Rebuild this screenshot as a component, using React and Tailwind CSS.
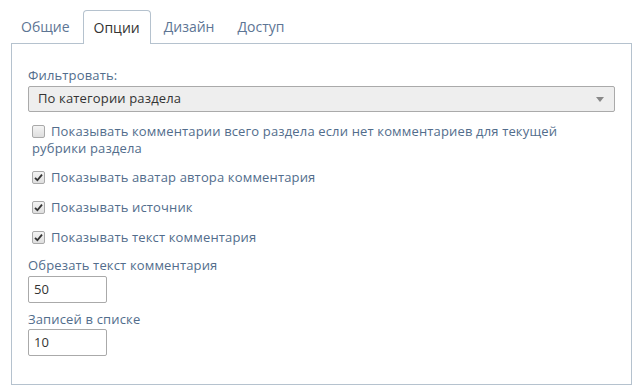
import React from "react";

function Check({ checked }) {
  return (
    <span className="relative mr-[6px] inline-block h-[13px] w-[13px] rounded-[2px] border border-[#a9a9a9] bg-gradient-to-b from-[#f4f4f4] to-[#dedede] align-[-2px]">
      {checked && (
        <svg className="absolute left-[1px] top-[1px]" width="9" height="9" viewBox="0 0 9 9">
          <path d="M1 4.8 L3.4 7.2 L8 1.6" fill="none" stroke="#333" strokeWidth="1.8" />
        </svg>
      )}
    </span>
  );
}

function CheckRow({ checked, children }) {
  return (
    <div className="text-[13px] leading-[17px] tracking-[0.15px] text-[#526d8c]">
      <Check checked={checked} />
      {children}
    </div>
  );
}

export default function App() {
  const tabs = ["Общие", "Опции", "Дизайн", "Доступ"];
  return (
    <div className="bg-white pl-[11px] pr-[5px] pt-[10px] pb-[6px] font-['Open_Sans',sans-serif]">
      <div className="flex h-[33px] items-stretch">
        {tabs.map((t, i) =>
          i === 1 ? (
            <div
              key={t}
              className="relative z-10 -mb-px mr-[3px] flex items-center rounded-t-[4px] border border-b-0 border-[#b5c2ce] bg-white px-[10px] text-[14px] text-[#333]"
            >
              {t}
            </div>
          ) : (
            <div
              key={t}
              className="mr-[3px] flex items-center px-[10px] text-[14px] text-[#5d7594]"
            >
              {t}
            </div>
          )
        )}
      </div>
      <div className="h-[342px] border border-[#b5c2ce] px-[16px] pt-[22px]">
        <div className="text-[13px] leading-[18px] tracking-[0.15px] text-[#526d8c]">Фильтровать:</div>
        <div className="mt-[2px] flex h-[26px] items-center justify-between rounded-[2px] border border-[#aaaaaa] bg-[#eeeeee] pl-[9px] pr-[10px] text-[13px] tracking-[0.15px] text-[#333]">
          <span>По категории раздела</span>
          <svg width="8" height="5" viewBox="0 0 8 5">
            <path d="M0 0 L8 0 L4 5 Z" fill="#888" />
          </svg>
        </div>
        <div className="mt-[11px] pl-[4px]">
          <CheckRow checked={false}>
            Показывать комментарии всего раздела если нет комментариев для текущей рубрики раздела
          </CheckRow>
        </div>
        <div className="mt-[12px] flex flex-col gap-[13px] pl-[4px]">
          <CheckRow checked>Показывать аватар автора комментария</CheckRow>
          <CheckRow checked>Показывать источник</CheckRow>
          <CheckRow checked>Показывать текст комментария</CheckRow>
        </div>
        <div className="mt-[10px] text-[13px] leading-[18px] tracking-[0.15px] text-[#526d8c]">Обрезать текст комментария</div>
        <div className="mt-[2px] flex h-[27px] w-[79px] items-center rounded-[2px] border border-[#aaaaaa] bg-white pl-[5px] text-[13px] text-[#333]">
          50
        </div>
        <div className="mt-[7px] text-[13px] leading-[18px] tracking-[0.15px] text-[#526d8c]">Записей в списке</div>
        <div className="mt-[1px] flex h-[27px] w-[79px] items-center rounded-[2px] border border-[#aaaaaa] bg-white pl-[5px] text-[13px] text-[#333]">
          10
        </div>
      </div>
    </div>
  );
}
